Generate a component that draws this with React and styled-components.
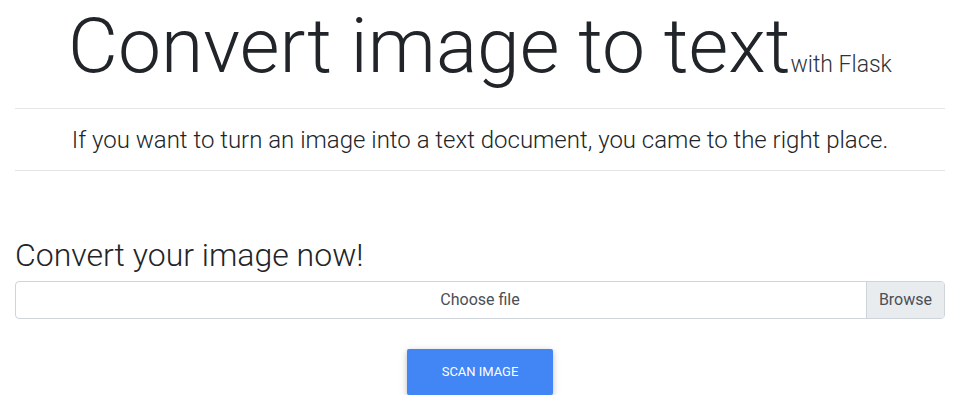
import styled, { createGlobalStyle } from 'styled-components';

const GlobalStyle = createGlobalStyle`
  body {
    margin: 0;
    background: #fff;
    color: #212529;
    font-family: Roboto, "Noto Sans", sans-serif;
  }
`;

const Page = styled.div`
  padding: 0 15px;
`;

const Header = styled.header`
  text-align: center;
`;

const Title = styled.h1`
  margin: 0 0 16px;
  font-size: 76.8px;
  font-weight: 300;
  line-height: 1.2;
`;

const Muted = styled.small`
  font-size: 23px;
  font-weight: 300;
  color: #2f3337;
`;

const Rule = styled.hr`
  margin: 0;
  border: 0;
  border-top: 1px solid rgba(0, 0, 0, 0.1);
`;

const Lead = styled.p`
  margin: 0;
  padding: 13px 0 12px;
  font-size: 24px;
  font-weight: 300;
  line-height: 36px;
`;

const FormTitle = styled.h2`
  margin: 65px 0 6px;
  font-size: 32px;
  font-weight: 300;
  line-height: 1.2;
`;

const FileField = styled.label`
  position: relative;
  display: block;
  height: 38px;
  box-sizing: border-box;
  border: 1px solid #ced4da;
  border-radius: 4px;
  color: #495057;
  font-size: 16px;
  line-height: 36px;
  text-align: center;
  overflow: hidden;
`;

const Browse = styled.span`
  position: absolute;
  top: 0;
  right: 0;
  bottom: 0;
  padding: 0 12px;
  background: #e9ecef;
  border-left: 1px solid #ced4da;
`;

const Actions = styled.div`
  display: flex;
  justify-content: center;
  margin-top: 30px;
`;

const ScanButton = styled.button`
  padding: 13.44px 34.24px;
  border: 0;
  border-radius: 2px;
  background: #4285f4;
  color: #fff;
  font-family: Roboto, sans-serif;
  font-size: 12.96px;
  line-height: 1.5;
  text-transform: uppercase;
  box-shadow: 0 2px 5px 0 rgba(0, 0, 0, 0.16), 0 2px 10px 0 rgba(0, 0, 0, 0.12);
  cursor: pointer;
`;

export default function App() {
  return (
    <Page>
      <GlobalStyle />
      <Header>
        <Title>
          Convert image to text<Muted>with Flask</Muted>
        </Title>
        <Rule />
        <Lead>If you want to turn an image into a text document, you came to the right place.</Lead>
        <Rule />
      </Header>
      <FormTitle>Convert your image now!</FormTitle>
      <FileField>
        Choose file
        <Browse>Browse</Browse>
      </FileField>
      <Actions>
        <ScanButton type="button">Scan image</ScanButton>
      </Actions>
    </Page>
  );
}
